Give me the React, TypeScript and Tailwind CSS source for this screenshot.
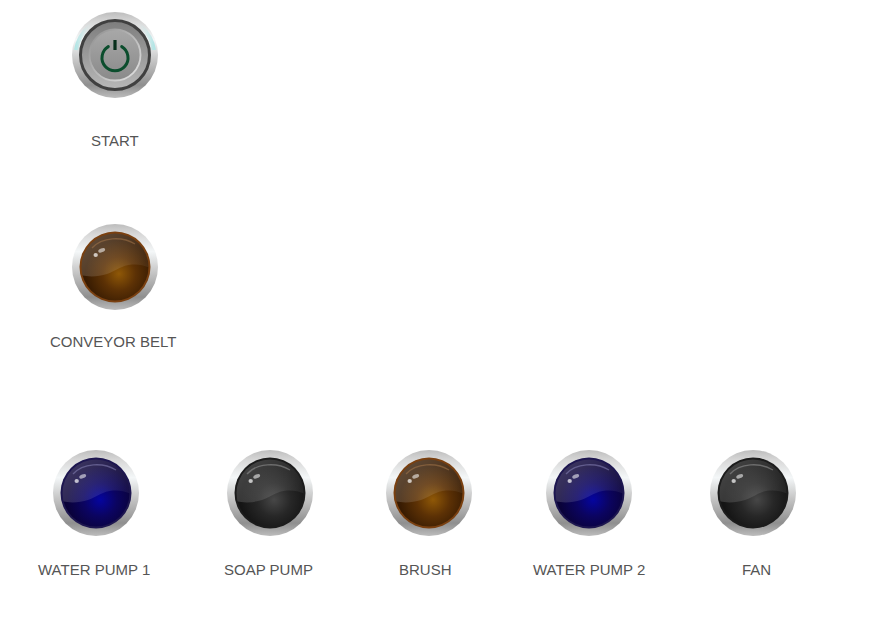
type Tone = { edge: string; hi: string; mid: string; dark: string; rim: string };
const brown: Tone = { edge: "#7a4010", hi: "#8f5807", mid: "#5c3105", dark: "#371b02", rim: "#a9794c" };
const blue: Tone = { edge: "#1d1650", hi: "#0505a0", mid: "#0b0460", dark: "#0a0238", rim: "#8f8bc0" };
const black: Tone = { edge: "#1c1c1c", hi: "#474747", mid: "#272727", dark: "#141414", rim: "#a0a0a0" };

function Ring({ id }: { id: string }) {
  return (
    <>
      <defs>
        <linearGradient id={`ring${id}`} x1="0" y1="0" x2="0" y2="1">
          <stop offset="0" stopColor="#bdbdbd" />
          <stop offset="0.12" stopColor="#d8d8d8" />
          <stop offset="0.32" stopColor="#f4f7f8" />
          <stop offset="0.55" stopColor="#c8c8c8" />
          <stop offset="0.85" stopColor="#8f8f8f" />
          <stop offset="1" stopColor="#bcbcbc" />
        </linearGradient>
      </defs>
      <circle cx="43" cy="43" r="43" fill={`url(#ring${id})`} />
    </>
  );
}

function Lamp({ tone, uid }: { tone: Tone; uid: string }) {
  return (
    <svg width="86" height="86" viewBox="0 0 86 86" className="block shrink-0 blur-[0.4px]">
      <Ring id={uid} />
      <defs>
        <radialGradient id={`face${uid}`} cx="0.56" cy="0.6" r="0.5">
          <stop offset="0" stopColor={tone.hi} />
          <stop offset="0.5" stopColor={tone.mid} />
          <stop offset="1" stopColor={tone.dark} />
        </radialGradient>
        <linearGradient id={`gloss${uid}`} x1="0" y1="0" x2="1" y2="0.6">
          <stop offset="0" stopColor="#ffffff" stopOpacity="0.24" />
          <stop offset="1" stopColor="#ffffff" stopOpacity="0.06" />
        </linearGradient>
        <clipPath id={`clip${uid}`}>
          <circle cx="43" cy="43" r="33.5" />
        </clipPath>
      </defs>
      <circle cx="43" cy="43" r="35.5" fill={tone.edge} />
      <circle cx="43" cy="43" r="33.5" fill={`url(#face${uid})`} />
      <g clipPath={`url(#clip${uid})`}>
        <path
          d="M8 5 H78 V44 C72 41 66 40 60 40.5 C50 41 44 47 35 50 C26 53 16 53 8 51 Z"
          fill={`url(#gloss${uid})`}
        />
      </g>
      <path d="M20 24 C30 13 50 12 63 20" fill="none" stroke={tone.rim} strokeOpacity="0.5" strokeWidth="1.4" />
      <ellipse cx="23.7" cy="31" rx="2.2" ry="2" fill="#ffffff" fillOpacity="0.7" />
      <ellipse cx="29.7" cy="26.3" rx="3.6" ry="1.9" fill="#ffffff" fillOpacity="0.55" transform="rotate(-22 29.7 26.3)" />
    </svg>
  );
}

function PowerButton() {
  return (
    <svg width="86" height="86" viewBox="0 0 86 86" className="block shrink-0 blur-[0.4px]">
      <Ring id="p" />
      <defs>
        <linearGradient id="pf" x1="0" y1="0" x2="0" y2="1">
          <stop offset="0" stopColor="#7d7d7d" />
          <stop offset="1" stopColor="#b8b8b8" />
        </linearGradient>
        <linearGradient id="pg" x1="0" y1="0" x2="0" y2="1">
          <stop offset="0" stopColor="#a8a8a8" />
          <stop offset="1" stopColor="#8a8a8a" />
        </linearGradient>
        <linearGradient id="ps" x1="0" y1="0" x2="1" y2="1">
          <stop offset="0" stopColor="#8e8e8e" />
          <stop offset="1" stopColor="#e4e4e4" />
        </linearGradient>
        <linearGradient id="pc" x1="0" y1="0" x2="1" y2="0">
          <stop offset="0" stopColor="#b4e6e6" />
          <stop offset="0.22" stopColor="#e0e6e6" stopOpacity="0" />
          <stop offset="0.78" stopColor="#e0e6e6" stopOpacity="0" />
          <stop offset="1" stopColor="#b4e6e6" />
        </linearGradient>
      </defs>
      <path d="M4 38 A39.5 39.5 0 0 1 82 38" fill="none" stroke="url(#pc)" strokeWidth="4" />
      <circle cx="43" cy="43" r="34.5" fill="url(#pf)" stroke="#404040" strokeWidth="3" />
      <circle cx="43" cy="43" r="25.5" fill="url(#pg)" stroke="url(#ps)" strokeWidth="1.8" />
      <path d="M36.3 34.6 A13 13 0 1 0 49.7 34.6" fill="none" stroke="#0b4d2d" strokeWidth="3" strokeLinecap="round" />
      <rect x="41.4" y="28" width="3.2" height="10" fill="#082f1c" />
    </svg>
  );
}

function Label({ children, className = "" }: { children: string; className?: string }) {
  return <span className={`block whitespace-nowrap leading-4 ${className}`}>{children}</span>;
}

export default function App() {
  return (
    <div
      className="w-[878px] h-[642px] bg-white flex flex-col text-[15px] text-[#555555] overflow-hidden"
      style={{ fontFamily: '"Liberation Sans", Arial, sans-serif' }}
    >
      <div className="pl-[72px] pt-[12px]">
        <PowerButton />
      </div>
      <div className="pl-[91px] pt-[35px]">
        <Label>START</Label>
      </div>
      <div className="pl-[72px] pt-[75px]">
        <Lamp tone={brown} uid="c" />
      </div>
      <div className="pl-[50px] pt-[24px]">
        <Label>CONVEYOR BELT</Label>
      </div>
      <div className="flex pl-[53px] pt-[100px] gap-[88px]">
        <Lamp tone={blue} uid="w1" />
        <div className="flex gap-[73px]">
          <Lamp tone={black} uid="s" />
          <Lamp tone={brown} uid="br" />
        </div>
        <div className="flex gap-[78px] -ml-[14px]">
          <Lamp tone={blue} uid="w2" />
          <Lamp tone={black} uid="f" />
        </div>
      </div>
      <div className="flex pt-[26px]">
        <Label className="ml-[38px] w-[186px]">WATER PUMP 1</Label>
        <Label className="w-[175px]">SOAP PUMP</Label>
        <Label className="w-[134px]">BRUSH</Label>
        <Label className="w-[209px]">WATER PUMP 2</Label>
        <Label>FAN</Label>
      </div>
    </div>
  );
}
